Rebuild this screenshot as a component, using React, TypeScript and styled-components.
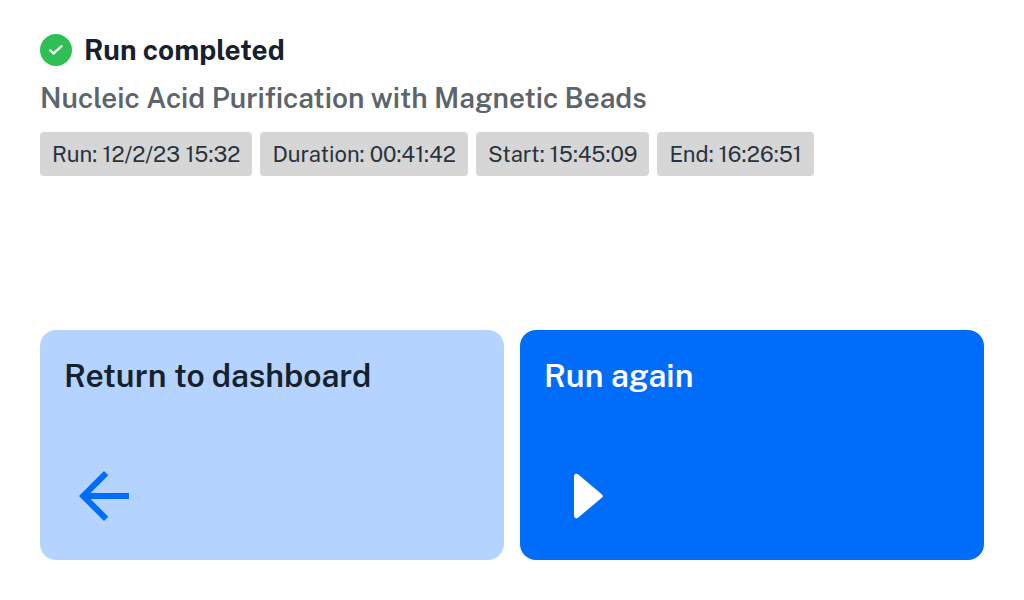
import React from 'react';
import styled, { createGlobalStyle } from 'styled-components';

const GlobalStyle = createGlobalStyle`
  *, *::before, *::after { box-sizing: border-box; }
  body {
    margin: 0;
    background: #ffffff;
    color: #16212d;
    font-family: 'Public Sans', Inter, 'Liberation Sans', sans-serif;
  }
`;

const Page = styled.main`
  display: flex;
  flex-direction: column;
  justify-content: space-between;
  gap: 40px;
  min-height: 100vh;
  padding: 32px 40px 40px;
`;

const Summary = styled.header`
  display: flex;
  flex-direction: column;
  gap: 12px;
`;

const Status = styled.div`
  display: flex;
  align-items: center;
  gap: 12px;
`;

const StatusIcon = styled.svg`
  width: 32px;
  height: 32px;
  flex: none;
`;

const Title = styled.h1`
  margin: 0;
  font-size: 28px;
  line-height: 36px;
  font-weight: 700;
`;

const Protocol = styled.h2`
  margin: 0;
  color: #5c646c;
  font-size: 28px;
  line-height: 36px;
  font-weight: 600;
`;

const Chips = styled.ul`
  display: flex;
  flex-wrap: wrap;
  gap: 8px;
  margin: 4px 0 0;
  padding: 0;
  list-style: none;
`;

const Chip = styled.li`
  padding: 8px 12px;
  border-radius: 4px;
  background: #d6d6d6;
  color: #29333e;
  font-size: 22px;
  line-height: 28px;
  white-space: nowrap;
`;

const Actions = styled.div`
  display: grid;
  grid-template-columns: 1fr 1fr;
  gap: 16px;
`;

const ActionButton = styled.button<{ $primary?: boolean }>`
  display: flex;
  flex-direction: column;
  align-items: flex-start;
  gap: 58px;
  padding: 24px;
  border: 0;
  border-radius: 16px;
  background: ${(p) => (p.$primary ? '#006cfa' : '#b4d4ff')};
  color: ${(p) => (p.$primary ? '#ffffff' : '#16212d')};
  font-family: inherit;
  font-size: 32px;
  line-height: 44px;
  font-weight: 600;
  text-align: left;
  cursor: pointer;
`;

const ActionIcon = styled.svg<{ $color: string }>`
  width: 80px;
  height: 80px;
  fill: ${(p) => p.$color};
`;

const details = [
  'Run: 12/2/23 15:32',
  'Duration: 00:41:42',
  'Start: 15:45:09',
  'End: 16:26:51',
];

export default function App() {
  return (
    <>
      <GlobalStyle />
      <Page>
        <Summary>
          <Status>
            <StatusIcon viewBox="0 0 32 32" aria-hidden="true">
              <circle cx="16" cy="16" r="16" fill="#2fbf55" />
              <path d="M10.2 16.3L13.7 19.4L21.5 12.2" fill="none" stroke="#fff" strokeWidth="2.3" strokeLinecap="round" />
            </StatusIcon>
            <Title>Run completed</Title>
          </Status>
          <Protocol>Nucleic Acid Purification with Magnetic Beads</Protocol>
          <Chips>
            {details.map((text) => (
              <Chip key={text}>{text}</Chip>
            ))}
          </Chips>
        </Summary>
        <Actions>
          <ActionButton type="button">
            Return to dashboard
            <ActionIcon $color="#006cfa" viewBox="0 0 80 80" aria-hidden="true">
              <path d="M40 15L44.3 19.3L26.5 37H65V43H26.5L44.3 60.7L40 65L15 40Z" />
            </ActionIcon>
          </ActionButton>
          <ActionButton type="button" $primary>
            Run again
            <ActionIcon $color="#ffffff" viewBox="0 0 80 80" aria-hidden="true">
              <path d="M30 20Q30 18 31.7 17.7Q33 17.5 34.3 18.6L57.8 38.2Q60 40 57.8 41.8L34.3 61.4Q33 62.5 31.7 62.3Q30 62 30 60Z" />
            </ActionIcon>
          </ActionButton>
        </Actions>
      </Page>
    </>
  );
}
